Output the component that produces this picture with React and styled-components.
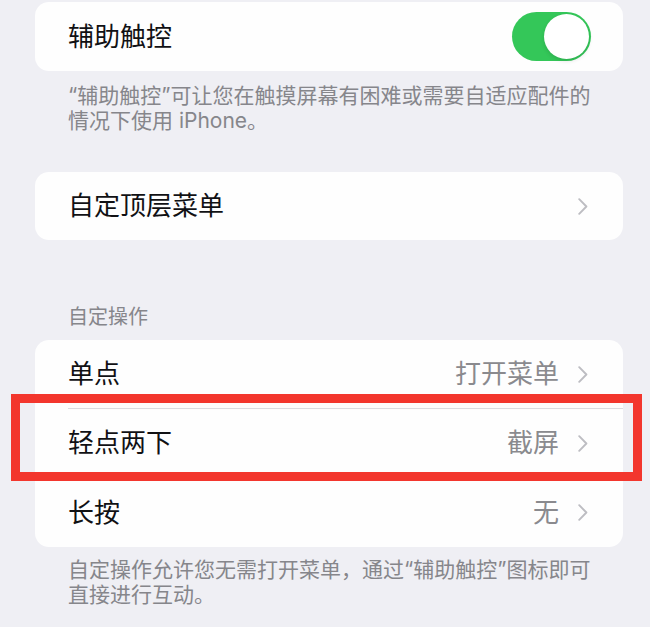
import styled, { createGlobalStyle } from "styled-components";

// Page-wide reset: iOS settings grey background and a CJK font stack
const GlobalStyle = createGlobalStyle`
  body {
    margin: 0;
    background: #efeff4;
    font-family: "Inter", "Noto Sans CJK SC", sans-serif;
    -webkit-font-smoothing: antialiased;
  }
`;

const Page = styled.div`
  display: flex;
  flex-direction: column;
  padding: 2px 27px 0 35px;
`;

// White rounded group of rows
const Card = styled.div`
  background: #fefefe;
  border-radius: 14px;
  margin-top: ${(props) => props.$top || 0}px;
`;

const Row = styled.div`
  position: relative;
  display: flex;
  align-items: center;
  height: ${(props) => props.$height || 68}px;
  padding: 0 35px 0 33px;
`;

const Divider = styled.div`
  height: 1px;
  margin-left: 33px;
  background: #dcdce1;
`;

const Label = styled.span`
  font-size: 26px;
  color: #111114;
  line-height: 1;
`;

const Value = styled.span`
  margin-left: auto;
  margin-right: 19px;
  font-size: 26px;
  color: #8a8a8e;
  line-height: 1;
`;

const ChevronIcon = styled.svg`
  flex: none;
  margin-left: ${(props) => (props.$alone ? "auto" : "0")};
`;

// Grey explanatory text under a group
const Note = styled.p`
  margin: 0;
  padding: ${(props) => props.$top || 0}px 20px 0 33px;
  font-size: 21px;
  line-height: 25px;
  color: #86868b;
`;

const SectionHeader = styled.div`
  margin-top: 65px;
  padding: 0 33px;
  font-size: 20px;
  line-height: 25px;
  color: #86868b;
`;

// Switch in its "on" state
const Toggle = styled.div`
  margin-left: auto;
  margin-right: -3px;
  width: 79px;
  height: 49px;
  border-radius: 25px;
  background: #34c759;
  display: flex;
  align-items: center;
  justify-content: flex-end;
  padding: 0 2px;
  box-sizing: border-box;
`;

const Knob = styled.div`
  width: 45px;
  height: 45px;
  border-radius: 50%;
  background: #ffffff;
  box-shadow: 0 2px 4px rgba(0, 0, 0, 0.12);
`;

// Red annotation frame drawn over the highlighted row
const Highlight = styled.div`
  position: absolute;
  top: -15px;
  bottom: -4px;
  left: -24px;
  right: -19px;
  border: 9px solid #f3362d;
  pointer-events: none;
  z-index: 1;
`;

const Chevron = ({ alone }) => (
  <ChevronIcon $alone={alone} width="10" height="17" viewBox="0 0 10 17">
    <path
      d="M1.2 1.2 L8.4 8.5 L1.2 15.8"
      fill="none"
      stroke="#bdbdc2"
      strokeWidth="1.9"
      strokeLinecap="round"
      strokeLinejoin="round"
    />
  </ChevronIcon>
);

const actions = [
  { id: "single", label: "单点", value: "打开菜单" },
  { id: "double", label: "轻点两下", value: "截屏", marked: true },
  { id: "long", label: "长按", value: "无" },
];

const App = () => {
  return (
    <Page>
      <GlobalStyle />

      <Card>
        <Row $height={69}>
          <Label>辅助触控</Label>
          <Toggle>
            <Knob />
          </Toggle>
        </Row>
      </Card>
      <Note $top={12}>
        “辅助触控”可让您在触摸屏幕有困难或需要自适应配件的情况下使用 iPhone。
      </Note>

      <Card $top={39}>
        <Row>
          <Label>自定顶层菜单</Label>
          <Chevron alone />
        </Row>
      </Card>

      <SectionHeader>自定操作</SectionHeader>
      <Card $top={10}>
        {actions.map((item, i) => (
          <div key={item.id}>
            {i > 0 && <Divider />}
            <Row $height={i === actions.length - 1 ? 69 : 68}>
              <Label>{item.label}</Label>
              <Value>{item.value}</Value>
              <Chevron />
              {item.marked && <Highlight />}
            </Row>
          </div>
        ))}
      </Card>
      <Note $top={10}>
        自定操作允许您无需打开菜单，通过“辅助触控”图标即可直接进行互动。
      </Note>
    </Page>
  );
};

export default App;
